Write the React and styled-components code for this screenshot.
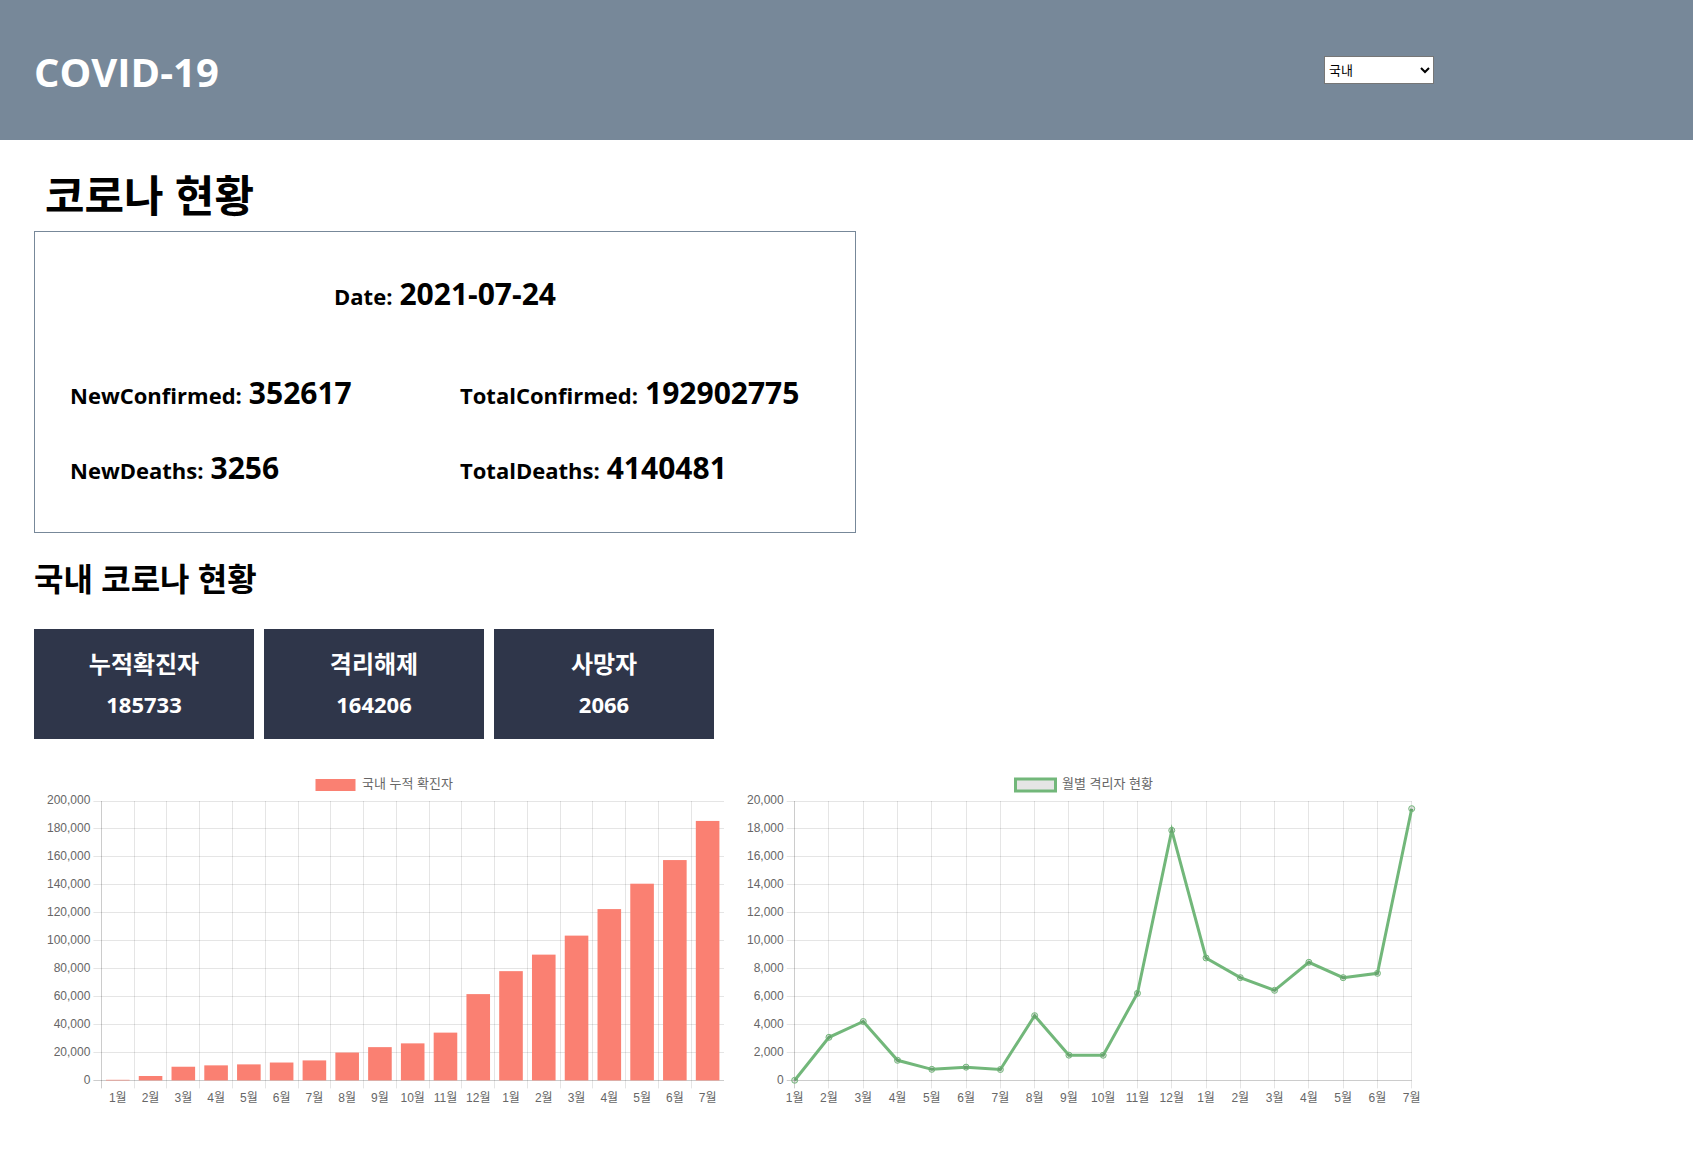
import React, { useState } from "react";
import styled, { createGlobalStyle } from "styled-components";

const GlobalStyle = createGlobalStyle`
  *, *::before, *::after { box-sizing: border-box; }
  body {
    margin: 0;
    background: #fff;
    color: #000;
    font-family: "Open Sans", "Noto Sans CJK KR", sans-serif;
  }
  h1, h2, h3, p, dl, dt, dd { margin: 0; }
`;

const Header = styled.header`
  background: #778899;
  color: #fff;
  padding: 0 34px;
`;

const HeaderInner = styled.div`
  max-width: 1400px;
  min-height: 140px;
  display: flex;
  align-items: center;
  justify-content: space-between;
`;

const Brand = styled.h1`
  padding-top: 4px;
  font-size: 40px;
  font-weight: 700;
  line-height: 56px;
`;

const RegionSelect = styled.select`
  width: 110px;
  height: 28px;
  border: 1px solid #767676;
  border-radius: 0;
  background: #fff;
  color: #000;
  font-family: "Liberation Sans", "Noto Sans CJK KR", sans-serif;
  font-size: 13px;
`;

const Main = styled.main`
  padding: 26px 34px 40px;
`;

const Content = styled.div`
  max-width: 1400px;
`;

const PageTitle = styled.h2`
  padding: 0 11px 5px;
  font-size: 43px;
  font-weight: 700;
  line-height: 60px;
`;

const Summary = styled.section`
  max-width: 822px;
  border: 1px solid #778899;
  padding: 26px 20px 25px;
  display: grid;
  grid-template-columns: 1fr 1fr;
`;

const Figure = styled.p`
  grid-column: ${(p) => (p.$wide ? "1 / -1" : "auto")};
  min-height: 75px;
  margin-bottom: ${(p) => (p.$wide ? "24px" : "0")};
  padding: 0 15px;
  display: flex;
  align-items: baseline;
  justify-content: ${(p) => (p.$wide ? "center" : "flex-start")};
  gap: 7px;
  font-size: 22px;
  font-weight: 700;
  line-height: 72px;
  white-space: nowrap;
`;

const FigureValue = styled.strong`
  font-size: 30px;
  font-weight: 700;
`;

const SectionTitle = styled.h2`
  padding: 20px 0 24px;
  font-size: 32px;
  font-weight: 700;
  line-height: 52px;
`;

const Cards = styled.dl`
  display: flex;
  flex-wrap: wrap;
  gap: 10px;
`;

const Card = styled.div`
  width: 220px;
  min-height: 110px;
  padding: 15px 10px;
  background: #2f364a;
  color: #fff;
  text-align: center;
  font-weight: 700;
  line-height: 40px;
`;

const CardLabel = styled.dt`
  font-size: 24px;
`;

const CardValue = styled.dd`
  font-size: 22px;
`;

const Charts = styled.section`
  display: grid;
  grid-template-columns: 1fr 1fr;
  margin-top: 20px;
`;

const ChartCell = styled.div`
  padding: 10px;
`;

const ChartSvg = styled.svg`
  display: block;
  width: 100%;
  height: auto;
  font-family: "Liberation Sans", "Noto Sans CJK KR", sans-serif;
  font-size: 12px;
  fill: #666;
`;

const LegendText = styled.text`
  font-size: 13px;
`;

const MONTHS = [1, 2, 3, 4, 5, 6, 7, 8, 9, 10, 11, 12, 1, 2, 3, 4, 5, 6, 7].map((m) => `${m}월`);

const CONFIRMED = [
  11, 3150, 9786, 10765, 11468, 12800, 14305, 19947, 23812, 26511, 34201, 61769,
  78205, 90029, 103639, 122634, 140799, 157723, 185733,
];

const ISOLATED = [
  10, 3085, 4216, 1437, 792, 947, 780, 4634, 1806, 1800, 6233, 17900, 8763, 7354,
  6448, 8452, 7354, 7664, 19450,
];

const TOP = 32;
const PLOT_HEIGHT = 279.4;
const BOTTOM = TOP + PLOT_HEIGHT;
const GREEN = "#72b77a";

const snap = (v) => Math.floor(v) + 0.5;

function Axes({ left, right, step, columns, max }) {
  const rows = Array.from({ length: 11 }, (_, i) => i);
  return (
    <g>
      {rows.map((i) => {
        const y = snap(TOP + (PLOT_HEIGHT * i) / 10);
        return (
          <g key={i}>
            <line x1={left - 8} x2={right} y1={y} y2={y} stroke="#000" strokeOpacity={i === 10 ? 0.2 : 0.1} />
            <text x={left - 11} y={35 + 28 * i} textAnchor="end">
              {((max * (10 - i)) / 10).toLocaleString("en-US")}
            </text>
          </g>
        );
      })}
      {Array.from({ length: columns }, (_, i) => {
        const x = snap(left + step * i);
        return (
          <line key={i} x1={x} x2={x} y1={TOP} y2={BOTTOM + 8} stroke="#000" strokeOpacity={i === 0 ? 0.2 : 0.1} />
        );
      })}
    </g>
  );
}

function BarChart() {
  const left = 57.4;
  const right = 680;
  const step = (right - left) / MONTHS.length;
  const width = step * 0.72;
  return (
    <ChartSvg viewBox="0 0 680 340" role="img" aria-label="국내 누적 확진자">
      <rect x="271.5" y="10" width="40" height="12" fill="#fa8072" />
      <LegendText x="318" y="19">국내 누적 확진자</LegendText>
      <Axes left={left} right={right} step={step} columns={MONTHS.length} max={200000} />
      {CONFIRMED.map((value, i) => {
        const center = left + step * (i + 0.5);
        const height = Math.max((value / 200000) * PLOT_HEIGHT, 0.6);
        return (
          <g key={i}>
            <rect x={center - width / 2} y={BOTTOM - height} width={width} height={height} fill="#fa8072" />
            <text x={center} y="333" textAnchor="middle">{MONTHS[i]}</text>
          </g>
        );
      })}
    </ChartSvg>
  );
}

function LineChart() {
  const left = 50.7;
  const right = 667.7;
  const step = (right - left) / (MONTHS.length - 1);
  const points = ISOLATED.map((value, i) => [left + step * i, BOTTOM - (value / 20000) * PLOT_HEIGHT]);
  return (
    <ChartSvg viewBox="0 0 680 340" role="img" aria-label="월별 격리자 현황">
      <rect x="271.5" y="10" width="40" height="12" fill="#e5e5e5" stroke={GREEN} strokeWidth="3" />
      <LegendText x="318" y="19">월별 격리자 현황</LegendText>
      <Axes left={left} right={right} step={step} columns={MONTHS.length} max={20000} />
      <polyline
        points={points.map((p) => p.join(",")).join(" ")}
        fill="none"
        stroke={GREEN}
        strokeWidth="3"
        strokeMiterlimit="10"
      />
      {points.map(([x, y], i) => (
        <g key={i}>
          <circle cx={x} cy={y} r="3" fill="#000" fillOpacity="0.1" stroke={GREEN} />
          <text x={x} y="333" textAnchor="middle">{MONTHS[i]}</text>
        </g>
      ))}
    </ChartSvg>
  );
}

const FIGURES = [
  { label: "Date", value: "2021-07-24", wide: true },
  { label: "NewConfirmed", value: "352617" },
  { label: "TotalConfirmed", value: "192902775" },
  { label: "NewDeaths", value: "3256" },
  { label: "TotalDeaths", value: "4140481" },
];

const TOTALS = [
  ["누적확진자", "185733"],
  ["격리해제", "164206"],
  ["사망자", "2066"],
];

export default function App() {
  const [region, setRegion] = useState("국내");
  return (
    <>
      <GlobalStyle />
      <Header>
        <HeaderInner>
          <Brand>COVID-19</Brand>
          <RegionSelect aria-label="지역" value={region} onChange={(e) => setRegion(e.target.value)}>
            <option>국내</option>
            <option>세계</option>
          </RegionSelect>
        </HeaderInner>
      </Header>
      <Main>
        <Content>
          <PageTitle>코로나 현황</PageTitle>
          <Summary>
            {FIGURES.map((f) => (
              <Figure key={f.label} $wide={f.wide}>
                <span>{f.label}:</span>
                <FigureValue>{f.value}</FigureValue>
              </Figure>
            ))}
          </Summary>
          <SectionTitle>국내 코로나 현황</SectionTitle>
          <Cards>
            {TOTALS.map(([label, value]) => (
              <Card key={label}>
                <CardLabel>{label}</CardLabel>
                <CardValue>{value}</CardValue>
              </Card>
            ))}
          </Cards>
          <Charts>
            <ChartCell><BarChart /></ChartCell>
            <ChartCell><LineChart /></ChartCell>
          </Charts>
        </Content>
      </Main>
    </>
  );
}
